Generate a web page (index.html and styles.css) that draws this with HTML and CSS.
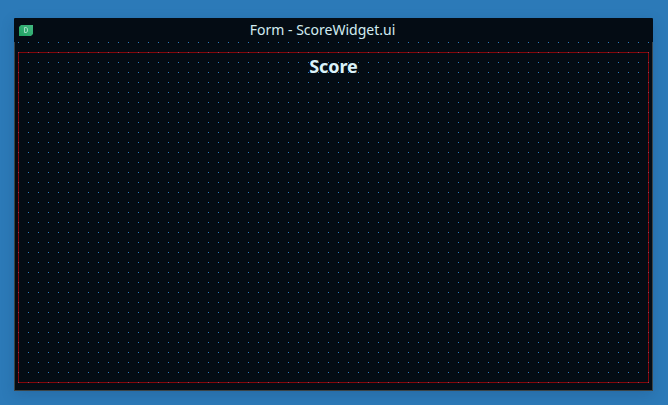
FILE: index.html
```html
<!DOCTYPE html>
<html lang="en">
<head>
<meta charset="utf-8">
<title>Form - ScoreWidget.ui</title>
<link rel="stylesheet" href="styles.css">
</head>
<body>
<main class="window">
  <header class="titlebar">
    <svg class="app-icon" viewBox="0 0 14 11" width="14" height="11" aria-hidden="true">
      <defs><linearGradient id="g" x1="0" y1="1" x2="1" y2="0"><stop offset="0" stop-color="#1fa061"/><stop offset="1" stop-color="#43b981"/></linearGradient></defs>
      <path d="M2 0H14V9L12 11H0V2Z" fill="url(#g)"/>
      <path d="M5.5 2.5H7Q8.6 2.5 8.6 5T7 7.5H5.5Z" fill="none" stroke="#a3dcc4"/>
    </svg>
    <h1 class="title">Form - ScoreWidget.ui</h1>
  </header>
  <section class="canvas">
    <div class="layout"><div class="score">Score</div></div>
  </section>
</main>
</body>
</html>
```
FILE: styles.css
```css
* { box-sizing: border-box; }
body {
  margin: 0;
  height: 405px;
  padding: 18px 15px 14px 14px;
  overflow: hidden;
  background: #2c7ab8;
  font-family: "Noto Sans", sans-serif;
}
.window {
  display: flex;
  flex-direction: column;
  height: 373px;
  border-radius: 1px;
  background: #040c14;
  box-shadow: 0 4px 14px rgba(20, 50, 90, .2);
}
.titlebar {
  display: flex;
  align-items: center;
  height: 24px;
  padding: 0 41px 0 5px;
}
.app-icon { flex: none; }
.title {
  flex: 1;
  margin: 0;
  text-align: center;
  font-size: 14px;
  line-height: 24px;
  font-weight: 400;
  color: #d3edf2;
}
.canvas {
  flex: 1;
  padding: 10px 3px 7px;
  border: 1px solid #3b4447;
  border-top: 0;
  background: url("data:image/svg+xml,%3Csvg xmlns='http://www.w3.org/2000/svg' width='10' height='10'%3E%3Crect width='1' height='1' fill='%232c7ab8'/%3E%3C/svg%3E") 3px 0 / 10px 10px;
  background-clip: padding-box;
}
.layout {
  height: 331px;
  border: 1px solid rgba(255, 0, 0, .5);
}
.score {
  text-align: center;
  font-size: 18px;
  line-height: 26px;
  font-weight: 700;
  letter-spacing: -.1px;
  color: #dcf3fa;
}
```
